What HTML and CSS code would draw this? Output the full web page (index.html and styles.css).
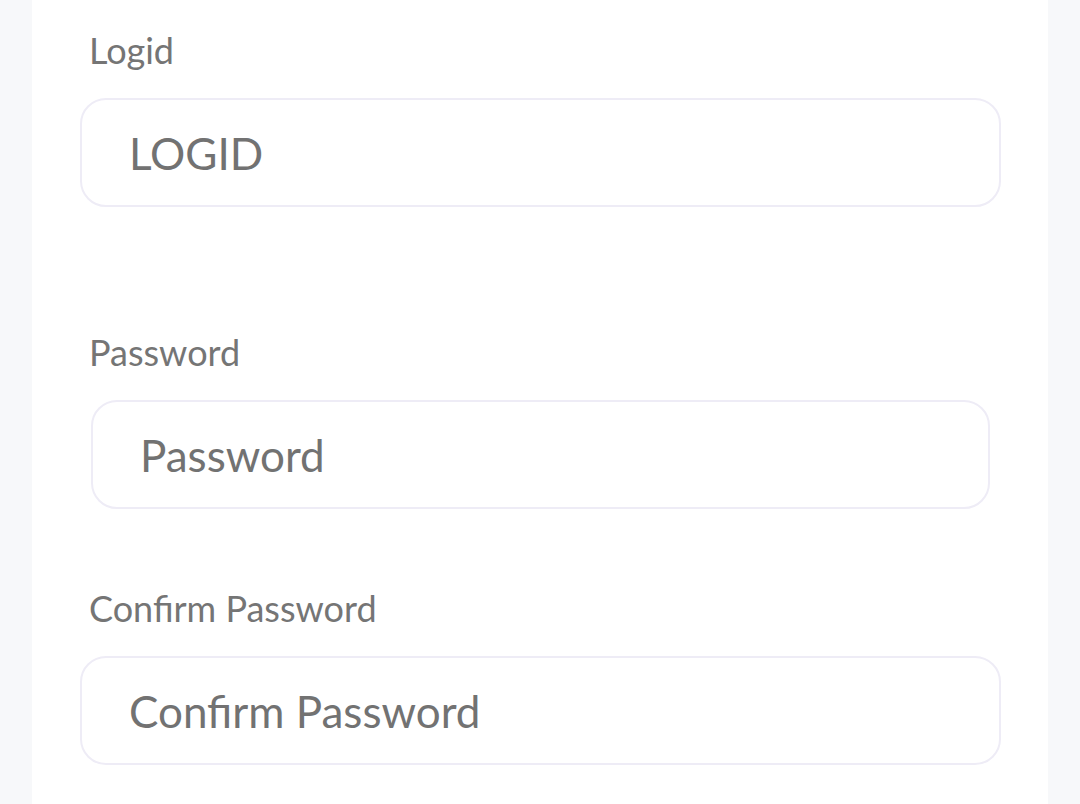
FILE: index.html
```html
<!DOCTYPE html>
<html lang="en">
<head>
<meta charset="utf-8">
<title>Account</title>
<link rel="stylesheet" href="styles.css">
</head>
<body>
<main class="card">
  <form class="form">
    <div class="field field-logid">
      <label class="label" for="logid">Logid</label>
      <input class="input" id="logid" type="text" placeholder="LOGID">
    </div>
    <div class="field field-password">
      <label class="label" for="password">Password</label>
      <input class="input input-narrow" id="password" type="password" placeholder="Password">
    </div>
    <div class="field">
      <label class="label" for="confirm">Confirm Password</label>
      <input class="input" id="confirm" type="password" placeholder="Confirm Password">
    </div>
  </form>
</main>
</body>
</html>
```

FILE: styles.css
```css
html, body {
  margin: 0;
  padding: 0;
}

body {
  background: #f7f8fa;
  font-family: Lato, "Open Sans", sans-serif;
  overflow: hidden;
}

.card {
  margin: 0 32px;
  height: 804px;
  background: #ffffff;
  box-sizing: border-box;
  padding: 28px 47px 0 48px;
}

.form {
  display: flex;
  flex-direction: column;
}

.field {
  display: flex;
  flex-direction: column;
}

.field-logid {
  margin-bottom: 123px;
}

.field-password {
  margin-bottom: 77px;
}

.label {
  display: block;
  padding-left: 9px;
  font-size: 36px;
  line-height: 44px;
  color: #757575;
  margin-bottom: 26px;
}

.input {
  display: block;
  box-sizing: border-box;
  width: 100%;
  height: 109px;
  margin: 0;
  padding: 0 20px 0 47px;
  border: 2px solid #eeecf6;
  border-radius: 26px;
  background: #ffffff;
  font-family: Lato, "Open Sans", sans-serif;
  font-size: 44px;
  color: #707070;
  outline: none;
}

.input::placeholder {
  color: #727272;
  opacity: 1;
}

.input-narrow {
  width: auto;
  margin: 0 11px;
}
```
